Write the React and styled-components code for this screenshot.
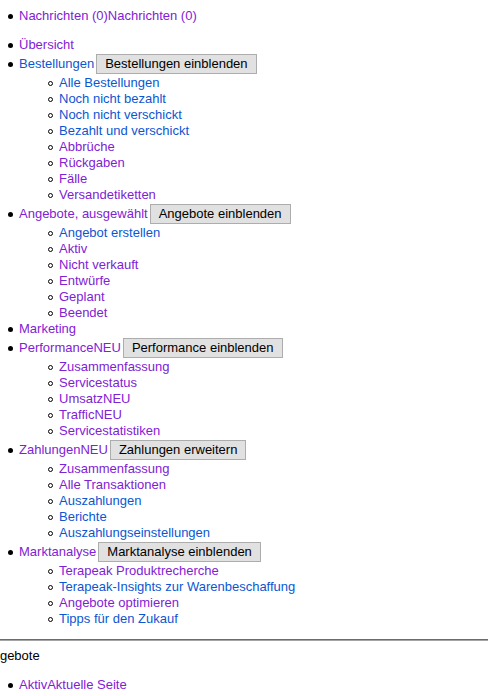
import React from "react";
import styled, { createGlobalStyle } from "styled-components";

const GlobalStyle = createGlobalStyle`
  html, body {
    margin: 0;
    padding: 0;
    background: #fff;
    overflow: hidden;
  }
  body {
    font-family: "Liberation Sans", Arial, sans-serif;
    font-size: 13px;
    color: #000;
  }
`;

const Page = styled.div`
  padding-top: 8px;
  width: 488px;
`;

const List = styled.ul`
  list-style: none;
  margin: 0 0 ${(p) => (p.$nested ? 0 : 13)}px 0;
  padding: 0 0 0 ${(p) => (p.$nested ? 40 : 0)}px;
`;

const Item = styled.li`
  margin: 0;
  padding: 0;
`;

const Row = styled.div`
  display: flex;
  align-items: center;
  min-height: 16px;
  line-height: 16px;
  white-space: nowrap;

  &::before {
    content: "";
    flex: none;
    box-sizing: border-box;
    width: 5px;
    height: 5px;
    border-radius: 50%;
    margin: 0 6px 0 8px;
    background: ${(p) => (p.$nested ? "transparent" : "#000")};
    border: ${(p) => (p.$nested ? "1px solid #000" : "none")};
  }
`;

const NavLink = styled.a`
  color: ${(p) => (p.$visited ? "#7f22d4" : "#0b56d3")};
  text-decoration: none;
  cursor: pointer;
`;

const ToggleButton = styled.button`
  box-sizing: border-box;
  height: 20px;
  margin: 1px 0 1px 2px;
  padding: 0 8px;
  font-family: "Liberation Sans", Arial, sans-serif;
  font-size: 13px;
  line-height: 18px;
  color: #000;
  background: #e1e1e1;
  border: 1px solid #adadad;
  border-radius: 0;
`;

const Divider = styled.hr`
  height: 0;
  border: none;
  border-top: 1px solid #6c6c6c;
  border-bottom: 1px solid #a4a4a4;
  margin: -1px 0 0 0;
`;

const SectionTitle = styled.div`
  margin: 7px 0 13px -16px;
  line-height: 16px;
  white-space: nowrap;
`;

const nav = [
  { label: "Übersicht", v: true },
  {
    label: "Bestellungen",
    v: false,
    button: "Bestellungen einblenden",
    children: [
      ["Alle Bestellungen", false],
      ["Noch nicht bezahlt", false],
      ["Noch nicht verschickt", false],
      ["Bezahlt und verschickt", false],
      ["Abbrüche", true],
      ["Rückgaben", true],
      ["Fälle", true],
      ["Versandetiketten", true],
    ],
  },
  {
    label: "Angebote, ausgewählt",
    v: true,
    button: "Angebote einblenden",
    children: [
      ["Angebot erstellen", false],
      ["Aktiv", true],
      ["Nicht verkauft", true],
      ["Entwürfe", true],
      ["Geplant", true],
      ["Beendet", true],
    ],
  },
  { label: "Marketing", v: true },
  {
    label: "PerformanceNEU",
    v: true,
    button: "Performance einblenden",
    children: [
      ["Zusammenfassung", true],
      ["Servicestatus", true],
      ["UmsatzNEU", true],
      ["TrafficNEU", true],
      ["Servicestatistiken", true],
    ],
  },
  {
    label: "ZahlungenNEU",
    v: true,
    button: "Zahlungen erweitern",
    children: [
      ["Zusammenfassung", true],
      ["Alle Transaktionen", true],
      ["Auszahlungen", false],
      ["Berichte", false],
      ["Auszahlungseinstellungen", false],
    ],
  },
  {
    label: "Marktanalyse",
    v: true,
    button: "Marktanalyse einblenden",
    children: [
      ["Terapeak Produktrecherche", true],
      ["Terapeak-Insights zur Warenbeschaffung", false],
      ["Angebote optimieren", true],
      ["Tipps für den Zukauf", false],
    ],
  },
];

const NavEntry = ({ entry }) => (
  <Item>
    <Row>
      <NavLink $visited={entry.v}>{entry.label}</NavLink>
      {entry.button && <ToggleButton>{entry.button}</ToggleButton>}
    </Row>
    {entry.children && (
      <List $nested>
        {entry.children.map(([label, v], i) => (
          <Item key={i}>
            <Row $nested>
              <NavLink $visited={v}>{label}</NavLink>
            </Row>
          </Item>
        ))}
      </List>
    )}
  </Item>
);

export default function App() {
  return (
    <Page>
      <GlobalStyle />
      <List>
        <Item>
          <Row>
            <NavLink $visited>Nachrichten (0)Nachrichten (0)</NavLink>
          </Row>
        </Item>
      </List>
      <List>
        {nav.map((entry, i) => (
          <NavEntry key={i} entry={entry} />
        ))}
      </List>
      <Divider />
      <SectionTitle>Angebote</SectionTitle>
      <List>
        <Item>
          <Row>
            <NavLink $visited>AktivAktuelle Seite</NavLink>
          </Row>
        </Item>
        <Item>
          <Row>
            <NavLink $visited>Nicht verkauft</NavLink>
          </Row>
        </Item>
      </List>
    </Page>
  );
}
